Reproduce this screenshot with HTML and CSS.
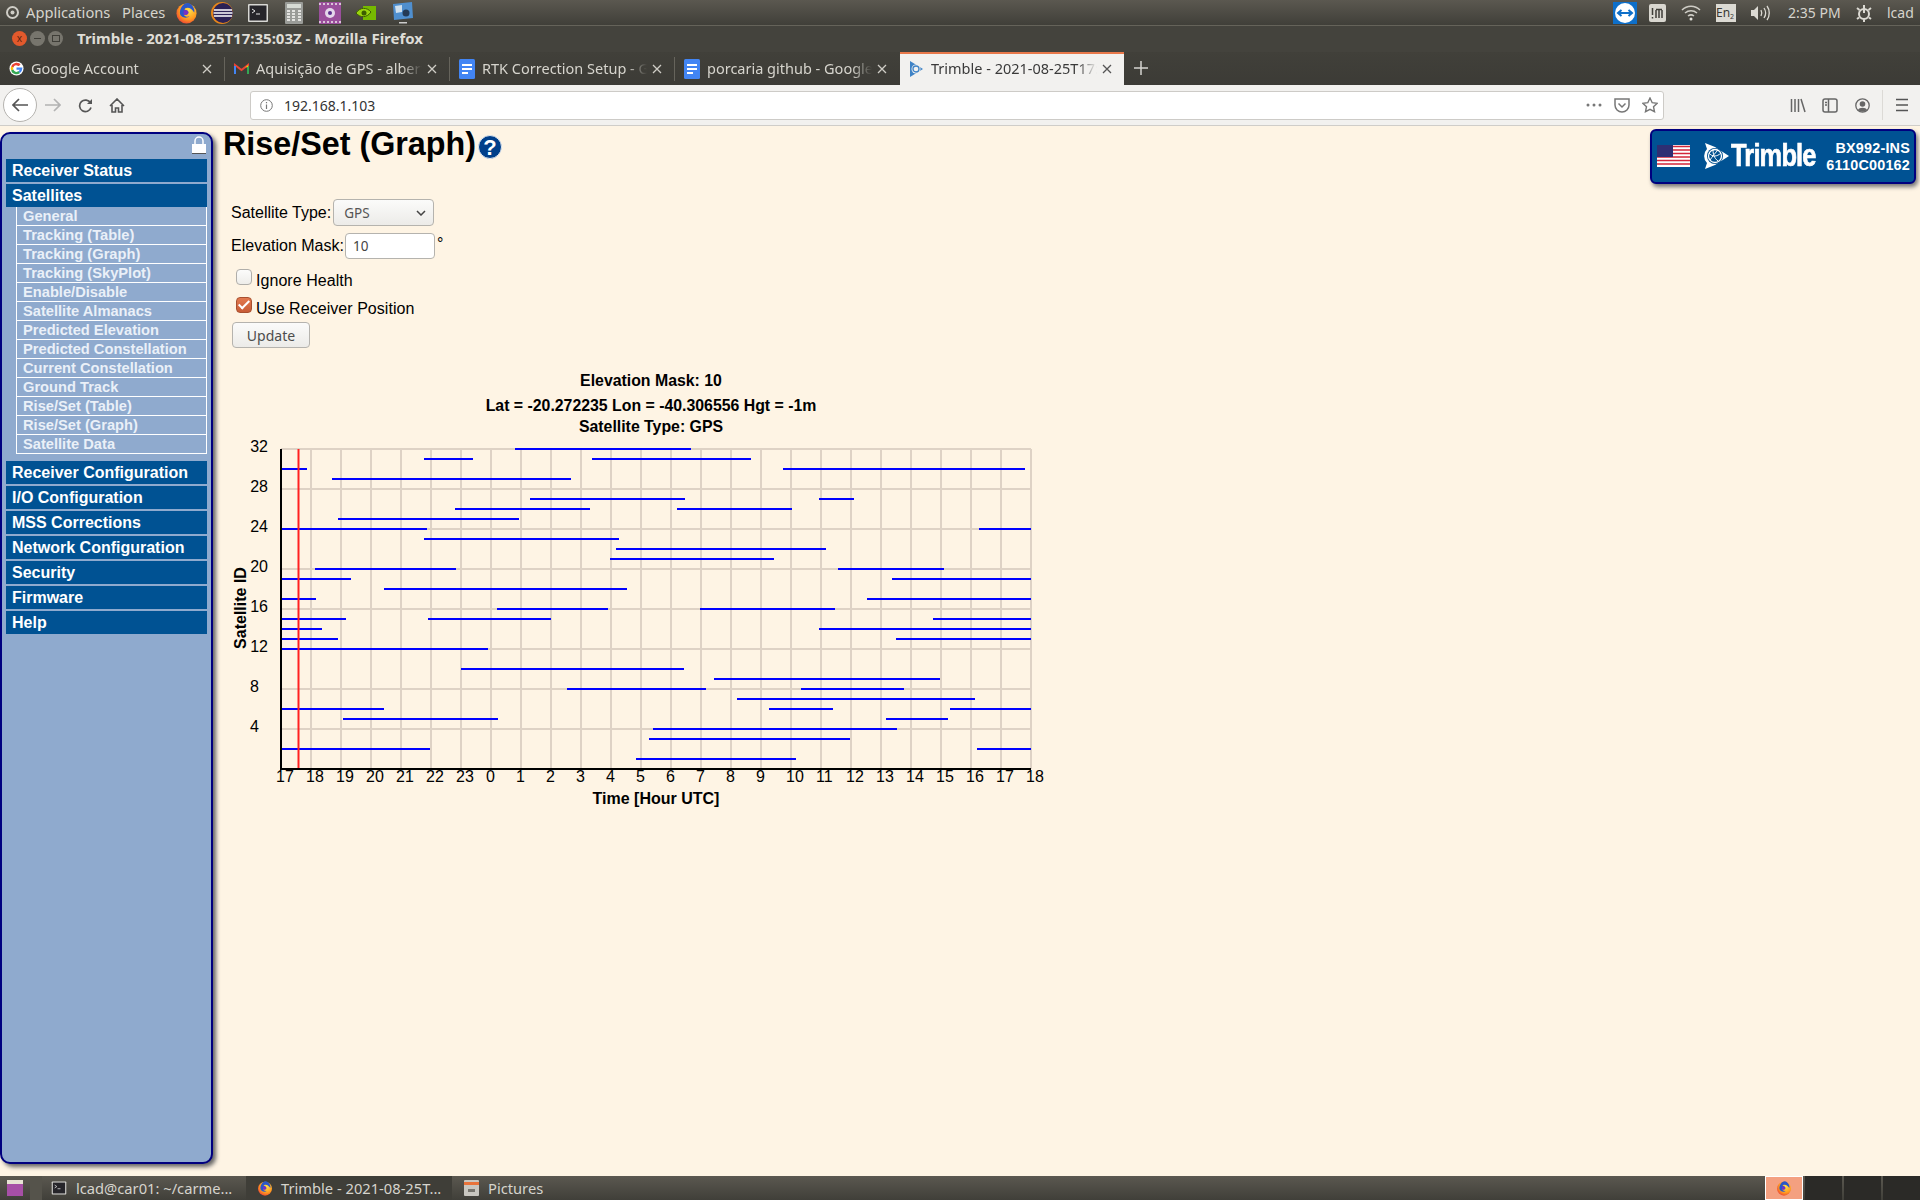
FILE: index.html
```html
<!DOCTYPE html>
<html lang="en">
<head>
    <meta charset="UTF-8">
    <meta name="viewport" content="width=device-width, initial-scale=1.0">
    <title>Trimble - 2021-08-25T17:35:03Z - Mozilla Firefox</title>
    <link rel="stylesheet" href="styles.css">
</head>
<body>
    <!-- shared icons -->
    <svg class="defs" width="0" height="0">
        <defs>
            <radialGradient id="foxfill" cx="0.6" cy="0.35" r="0.8">
                <stop offset="0" stop-color="#ffe14a"/>
                <stop offset="0.55" stop-color="#ff9a1f"/>
                <stop offset="1" stop-color="#e5213f"/>
            </radialGradient>
            <symbol id="i-firefox" viewBox="0 0 24 24">
                <circle cx="12" cy="13" r="10.5" fill="url(#foxfill)"/>
                <path d="M7 6C9 2 14 1 16 3c3 2 5 6 4 9-2-3-4-5-7-5-2 0-3 1-3 2 2 0 4 1 4 3s-3 3-5 2c1 2 4 3 6 2-2 2-6 2-8 0-3-2-2-7 0-10z" fill="#2a57c7"/>
                <path d="M9 10c2-1 5 0 5 2s-3 3-5 2z" fill="#7b2fc2"/>
            </symbol>
            <symbol id="i-term" viewBox="0 0 22 22">
                <rect x="1" y="2" width="20" height="18" rx="1" fill="#d8d8d4"/>
                <rect x="2.500" y="3.500" width="17" height="15" fill="#26252a"/>
                <path d="M5 7l3 2-3 2M9 12h4" fill="none" stroke="#e8e8e8" stroke-width="1"/>
            </symbol>
            <symbol id="i-doc" viewBox="0 0 16 20">
                <rect width="16" height="20" rx="1.500" fill="#4285f4"/>
                <path d="M3 6h10M3 10h10M3 14h6" stroke="#fff" stroke-width="1.800"/>
            </symbol>
            <symbol id="i-x" viewBox="0 0 10 10">
                <path d="M1 1l8 8M9 1l-8 8" fill="none" stroke="currentColor" stroke-width="1.300"/>
            </symbol>
        </defs>
    </svg>

    <!-- desktop panel -->
    <div class="panel-top">
        <div class="panel-left">
            <svg class="ubuntu" width="13" height="13" viewBox="0 0 13 13"><circle cx="6.500" cy="6.500" r="5.500" fill="none" stroke="#cfcdc6" stroke-width="2"/><circle cx="6.500" cy="6.500" r="2" fill="#cfcdc6"/></svg>
            <span class="menu-apps">Applications</span>
            <span class="menu-places">Places</span>
            <svg class="launch l-fox" width="23" height="23"><use href="#i-firefox"/></svg>
            <svg class="launch l-ecl" width="24" height="24" viewBox="0 0 24 24"><circle cx="12" cy="12" r="11" fill="#e8861a"/><circle cx="13" cy="12" r="10" fill="#2c2255"/><path d="M4 9h18M3.500 12h19M4 15h18" stroke="#fff" stroke-width="1.600"/></svg>
            <svg class="launch l-term" width="22" height="22"><use href="#i-term"/></svg>
            <svg class="launch l-calc" width="18" height="22" viewBox="0 0 18 22"><rect width="18" height="22" rx="1" fill="#9a9c98"/><rect x="2" y="2" width="14" height="4" fill="#d7dbd5"/><path d="M2 9h3M7 9h3M13 9h3M2 12h3M7 12h3M13 12h3M2 15h3M7 15h3M13 15h3M2 18h3M7 18h3M13 18h3" stroke="#e3e3e0" stroke-width="2"/></svg>
            <svg class="launch l-vid" width="22" height="22" viewBox="0 0 22 22"><rect width="22" height="22" fill="#9a4f9c"/><path d="M0 2h22M0 20h22" stroke="#d9c4d8" stroke-width="2" stroke-dasharray="2 2"/><circle cx="11" cy="11" r="5" fill="#e4d7ea"/><circle cx="11" cy="11" r="2" fill="#5b2d8e"/></svg>
            <svg class="launch l-nv" width="21" height="18" viewBox="0 0 21 18"><rect x="8" y="2" width="13" height="14" fill="#76b900"/><path d="M1 9c4-6 11-6 15-1-4 6-11 6-15 1z" fill="#9bd40f" stroke="#3c5e00"/><circle cx="9" cy="9" r="2.500" fill="#3c5e00"/></svg>
            <svg class="launch l-box" width="22" height="24" viewBox="0 0 22 24"><path d="M1 3l19-2 1 16-19 2z" fill="#4f8fcf"/><path d="M3 5l7-1v7l-6 1z" fill="#cfe0ee"/><circle cx="14" cy="12" r="3.500" fill="#243a55"/><path d="M7 21h8v1.500H7z" fill="#ccc"/></svg>
        </div>
        <div class="panel-right">
            <svg class="tray t-tv" width="24" height="22" viewBox="0 0 24 22"><rect width="24" height="22" fill="#0e6fc9"/><circle cx="12" cy="11" r="10" fill="#fff"/><path d="M5 11h14M8.500 8L5 11l3.500 3M15.500 8L19 11l-3.500 3" fill="none" stroke="#0e6fc9" stroke-width="2"/></svg>
            <svg class="tray t-nm" width="17" height="18" viewBox="0 0 17 18"><rect width="17" height="18" rx="2" fill="#d9d7d0"/><path d="M3.500 4v7M3.500 13v1.500M7 6v8M10 6v8M13 6v8M7 5.500h6" stroke="#3f3e38" stroke-width="1.500" fill="none"/></svg>
            <svg class="tray t-wifi" width="20" height="16" viewBox="0 0 20 16"><path d="M1 5c5-5 13-5 18 0M4 8c3.500-3 8.500-3 12 0M7 11c2-1.500 4-1.500 6 0" fill="none" stroke="#cfcdc6" stroke-width="1.500"/><circle cx="10" cy="14" r="1.500" fill="#e4e2dc"/></svg>
            <span class="t-en">En<small>2</small></span>
            <svg class="tray t-vol" width="21" height="18" viewBox="0 0 21 18"><path d="M1 6h3l4-4v14l-4-4H1z" fill="#dcdad3"/><path d="M11 6c1 2 1 4 0 6M14 4c2 3 2 7 0 10M17 2c3 4 3 10 0 14" fill="none" stroke="#dcdad3" stroke-width="1.300"/></svg>
            <span class="t-time">2:35 PM</span>
            <svg class="tray t-gear" width="16" height="18" viewBox="0 0 16 18"><circle cx="8" cy="10" r="5" fill="none" stroke="#dcdad3" stroke-width="2"/><path d="M8 1v8M1 4l2.500 2M15 4l-2.500 2M1 15l2-1.500M15 15l-2-1.500M8 15.500V18" stroke="#dcdad3" stroke-width="2"/></svg>
            <span class="t-user">lcad</span>
        </div>
    </div>

    <!-- firefox window -->
    <div class="titlebar">
        <span class="wbtn wbtn-close">x</span>
        <span class="wbtn wbtn-min"><i class="bar"></i></span>
        <span class="wbtn wbtn-max"><i class="box"></i></span>
        <span class="wintitle">Trimble - 2021-08-25T17:35:03Z - Mozilla Firefox</span>
    </div>

    <div class="tabs">
        <div class="tab">
            <svg class="favicon" width="15" height="15" viewBox="0 0 16 16"><circle cx="8" cy="8" r="7.500" fill="#fff"/><path d="M8 3.200a4.800 4.800 0 0 1 3.300 1.300" fill="none" stroke="#ea4335" stroke-width="2.600"/><path d="M3.400 6.400a4.800 4.800 0 0 1 7.900-1.900" fill="none" stroke="#ea4335" stroke-width="2.600"/><path d="M3.400 9.600a4.800 4.800 0 0 1 0-3.200" fill="none" stroke="#fbbc05" stroke-width="2.600"/><path d="M11 11.800a4.800 4.800 0 0 1-7.600-2.200" fill="none" stroke="#34a853" stroke-width="2.600"/><path d="M8 8h5a5 5 0 0 1-2 3.800" fill="none" stroke="#4285f4" stroke-width="2.400"/></svg>
            <span class="tab-text">Google Account</span>
            <svg class="tab-x" width="10" height="10"><use href="#i-x"/></svg>
        </div>
        <div class="tab-sep"></div>
        <div class="tab">
            <svg class="favicon" width="15" height="12" viewBox="0 0 15 12"><path d="M1 11V2l6.500 5L14 2v9" fill="none" stroke="#ea4335" stroke-width="2"/><path d="M1 11V3" stroke="#4285f4" stroke-width="2"/><path d="M14 11V3" stroke="#34a853" stroke-width="2"/><path d="M11 4.500L14 2v2" fill="#fbbc05"/></svg>
            <span class="tab-text">Aquisição de GPS - alberto.ufes</span>
            <svg class="tab-x" width="10" height="10"><use href="#i-x"/></svg>
        </div>
        <div class="tab-sep"></div>
        <div class="tab">
            <svg class="favicon" width="16" height="20"><use href="#i-doc"/></svg>
            <span class="tab-text">RTK Correction Setup - Google Docs</span>
            <svg class="tab-x" width="10" height="10"><use href="#i-x"/></svg>
        </div>
        <div class="tab-sep"></div>
        <div class="tab">
            <svg class="favicon" width="16" height="20"><use href="#i-doc"/></svg>
            <span class="tab-text">porcaria github - Google Docs</span>
            <svg class="tab-x" width="10" height="10"><use href="#i-x"/></svg>
        </div>
        <div class="tab tab-active">
            <svg class="favicon" width="15" height="18" viewBox="0 0 15 18"><path d="M1 1l13 8-13 8z" fill="#3f83c6"/><circle cx="7" cy="9" r="4.500" fill="#f2f1ef"/><circle cx="7" cy="9" r="3" fill="none" stroke="#3f83c6" stroke-width="1.300"/></svg>
            <span class="tab-text">Trimble - 2021-08-25T17:35:03Z</span>
            <svg class="tab-x" width="10" height="10"><use href="#i-x"/></svg>
        </div>
        <svg class="tab-new" width="14" height="14" viewBox="0 0 14 14"><path d="M7 0v14M0 7h14" stroke="#d5d4cf" stroke-width="1.500"/></svg>
    </div>

    <div class="navbar">
        <span class="nav-back"><svg width="16" height="14" viewBox="0 0 16 14"><path d="M7 1L1 7l6 6M1 7h15" fill="none" stroke="#555" stroke-width="1.700"/></svg></span>
        <svg class="nav-fwd" width="16" height="14" viewBox="0 0 16 14"><path d="M9 1l6 6-6 6M15 7H0" fill="none" stroke="#b3b3b3" stroke-width="1.700"/></svg>
        <svg class="nav-reload" width="15" height="15" viewBox="0 0 15 15"><path d="M12.500 5A5.800 5.800 0 1 0 13 9.500" fill="none" stroke="#555" stroke-width="1.700"/><path d="M14 1v5H9z" fill="#555"/></svg>
        <svg class="nav-home" width="16" height="15" viewBox="0 0 16 15"><path d="M1 8l7-7 7 7M3 7v7h3.500v-4h3v4H13V7" fill="none" stroke="#555" stroke-width="1.600"/></svg>
        <div class="urlbar">
            <svg class="url-info" width="13" height="13" viewBox="0 0 13 13"><circle cx="6.500" cy="6.500" r="5.800" fill="none" stroke="#777"/><path d="M6.500 5.500v4.500M6.500 3v1.300" stroke="#777" stroke-width="1.200"/></svg>
            <span class="url-text">192.168.1.103</span>
            <svg class="url-dots" width="16" height="4" viewBox="0 0 16 4"><circle cx="2" cy="2" r="1.500" fill="#777"/><circle cx="8" cy="2" r="1.500" fill="#777"/><circle cx="14" cy="2" r="1.500" fill="#777"/></svg>
            <svg class="url-pocket" width="16" height="15" viewBox="0 0 16 15"><path d="M1 1h14v6a7 7 0 0 1-14 0z" fill="none" stroke="#777" stroke-width="1.500"/><path d="M4.500 5.500L8 9l3.500-3.500" fill="none" stroke="#777" stroke-width="1.500"/></svg>
            <svg class="url-star" width="16" height="16" viewBox="0 0 16 16"><path d="M8 1l2.200 4.700 5 .6-3.700 3.400 1 5L8 12.300l-4.500 2.400 1-5L.8 6.300l5-.6z" fill="none" stroke="#777" stroke-width="1.400"/></svg>
        </div>
        <svg class="nav-lib" width="16" height="15" viewBox="0 0 16 15"><path d="M1.500 1v13M5 1v13M8.500 1v13M11 1l4 13" fill="none" stroke="#666" stroke-width="1.500"/></svg>
        <svg class="nav-side" width="16" height="15" viewBox="0 0 16 15"><rect x="1" y="1" width="14" height="13" rx="2" fill="none" stroke="#666" stroke-width="1.500"/><path d="M6.500 1v13M3 4.500h2M3 7h2" stroke="#666" stroke-width="1.500"/></svg>
        <svg class="nav-acct" width="15" height="15" viewBox="0 0 15 15"><circle cx="7.500" cy="7.500" r="6.700" fill="none" stroke="#666" stroke-width="1.300"/><circle cx="7.500" cy="6" r="2.800" fill="#666"/><path d="M3 12c1-3 8-3 9 0a6.500 6.500 0 0 1-9 0z" fill="#666"/></svg>
        <div class="nav-sep"></div>
        <svg class="nav-menu" width="12" height="14" viewBox="0 0 12 14"><path d="M0 1.500h12M0 7h12M0 12.500h12" stroke="#555" stroke-width="1.700"/></svg>
    </div>

    <!-- receiver page -->
    <div class="page">
        <aside class="sidebar">
            <div class="lock-row">
                <svg width="14" height="18" viewBox="0 0 14 18"><path d="M3 8V5a4 4 0 0 1 8 0v3" fill="none" stroke="#fff" stroke-width="1.500"/><rect x="0" y="8" width="14" height="10" fill="#fff"/><path d="M0 17.500h14" stroke="#555"/></svg>
            </div>
            <a class="nav-item">Receiver Status</a>
            <a class="nav-item nav-open">Satellites</a>
            <ul class="subnav">
                <li>General</li>
                <li>Tracking (Table)</li>
                <li>Tracking (Graph)</li>
                <li>Tracking (SkyPlot)</li>
                <li>Enable/Disable</li>
                <li>Satellite Almanacs</li>
                <li>Predicted Elevation</li>
                <li>Predicted Constellation</li>
                <li>Current Constellation</li>
                <li>Ground Track</li>
                <li>Rise/Set (Table)</li>
                <li>Rise/Set (Graph)</li>
                <li>Satellite Data</li>
            </ul>
            <a class="nav-item">Receiver Configuration</a>
            <a class="nav-item">I/O Configuration</a>
            <a class="nav-item">MSS Corrections</a>
            <a class="nav-item">Network Configuration</a>
            <a class="nav-item">Security</a>
            <a class="nav-item">Firmware</a>
            <a class="nav-item">Help</a>
        </aside>

        <main class="content">
            <div class="head">
                <h1>Rise/Set (Graph)</h1>
                <svg class="help" width="24" height="24" viewBox="0 0 24 24"><circle cx="12" cy="12" r="11.500" fill="#003f8a" stroke="#dfe6ef"/><text class="help-mark" x="12" y="20">?</text></svg>
                <div class="brand">
                    <svg class="flag" width="33" height="22" viewBox="0 0 33 22">
                        <rect width="33" height="22" fill="#fff"/>
                        <path d="M0 1.500h33M0 5h33M0 8.500h33M0 12h33M0 15.500h33M0 19h33" stroke="#d3263a" stroke-width="1.700"/>
                        <rect width="16" height="12" fill="#2e2f73"/>
                    </svg>
                    <svg class="globe" width="28" height="28" viewBox="0 0 28 28"><path d="M3 1l10 4 14 9-14 9-10 4 2-6a10 10 0 0 1 0-14z" fill="#fff"/><circle cx="13" cy="14" r="8" fill="#00508f"/><circle cx="13" cy="14" r="6.500" fill="none" stroke="#fff" stroke-width="1.300"/><path d="M7 11c3 4 8 4 12 0M11 8c0 4 1 8 5 11M8 18c2-3 6-8 8-10" fill="none" stroke="#fff"/></svg>
                    <span class="brand-name">Trimble</span>
                    <div class="brand-model">
                        <span>BX992-INS</span>
                        <span>6110C00162</span>
                    </div>
                </div>
            </div>

            <form class="opts">
                <div class="row row-sat">
                    <label>Satellite Type:</label>
                    <div class="sel-wrap">
                        <select class="sel"><option>GPS</option></select>
                        <svg class="sel-arrow" width="10" height="6" viewBox="0 0 10 6"><path d="M1 1l4 4 4-4" fill="none" stroke="#444" stroke-width="1.500"/></svg>
                    </div>
                </div>
                <div class="row row-mask">
                    <label>Elevation Mask:</label>
                    <input class="txt" type="text" value="10">
                    <span class="deg">°</span>
                </div>
                <div class="row row-chk">
                    <input class="chk" type="checkbox">
                    <label>Ignore Health</label>
                </div>
                <div class="row row-chk2">
                    <input class="chk" type="checkbox" checked>
                    <label>Use Receiver Position</label>
                </div>
                <button class="btn" type="button">Update</button>
            </form>

            <!-- viewBox uses page coordinates -->
            <svg class="chart" width="860" height="460" viewBox="220 360 860 460">
                <path class="grid" d="M311 449V769M341 449V769M371 449V769M401 449V769M431 449V769M461 449V769M491 449V769M521 449V769M551 449V769M581 449V769M611 449V769M641 449V769M671 449V769M701 449V769M731 449V769M761 449V769M791 449V769M821 449V769M851 449V769M881 449V769M911 449V769M941 449V769M971 449V769M1001 449V769M1031 449V769
                    M281 449H1031M281 489H1031M281 529H1031M281 569H1031M281 609H1031M281 649H1031M281 689H1031M281 729H1031"/>
                <path class="sats" d="M515 449H691
                    M424 459H473M592 459H751
                    M281 469H307M783 469H1025
                    M332 479H571
                    M530 499H685M819 499H854
                    M455 509H590M677 509H792
                    M338 519H519
                    M281 529H427M979 529H1031
                    M424 539H619
                    M616 549H826
                    M610 559H774
                    M315 569H456M838 569H944
                    M281 579H351M892 579H1031
                    M384 589H627
                    M281 599H316M867 599H1031
                    M497 609H608M700 609H835
                    M281 619H346M428 619H551M933 619H1031
                    M281 629H322M819 629H1031
                    M281 639H338M896 639H1031
                    M281 649H488
                    M461 669H684
                    M714 679H940
                    M567 689H706M801 689H904
                    M737 699H975
                    M281 709H384M769 709H833M950 709H1031
                    M343 719H498M886 719H948
                    M653 729H897
                    M649 739H850
                    M281 749H430M977 749H1031
                    M636 759H796"/>
                <path class="now" d="M298.500 449V769"/>
                <path class="axis" d="M281 449V769H1031"/>

                <text class="t-title" x="651" y="386">Elevation Mask: 10</text>
                <text class="t-title" x="651" y="411">Lat = -20.272235 Lon = -40.306556 Hgt = -1m</text>
                <text class="t-title" x="651" y="432">Satellite Type: GPS</text>

                <g class="ylab">
                    <text x="268" y="452">32</text>
                    <text x="268" y="492">28</text>
                    <text x="268" y="532">24</text>
                    <text x="268" y="572">20</text>
                    <text x="268" y="612">16</text>
                    <text x="268" y="652">12</text>
                    <text x="259" y="692">8</text>
                    <text x="259" y="732">4</text>
                </g>
                <g class="xlab">
                    <text x="276" y="782">17</text>
                    <text x="306" y="782">18</text>
                    <text x="336" y="782">19</text>
                    <text x="366" y="782">20</text>
                    <text x="396" y="782">21</text>
                    <text x="426" y="782">22</text>
                    <text x="456" y="782">23</text>
                    <text x="486" y="782">0</text>
                    <text x="516" y="782">1</text>
                    <text x="546" y="782">2</text>
                    <text x="576" y="782">3</text>
                    <text x="606" y="782">4</text>
                    <text x="636" y="782">5</text>
                    <text x="666" y="782">6</text>
                    <text x="696" y="782">7</text>
                    <text x="726" y="782">8</text>
                    <text x="756" y="782">9</text>
                    <text x="786" y="782">10</text>
                    <text x="816" y="782">11</text>
                    <text x="846" y="782">12</text>
                    <text x="876" y="782">13</text>
                    <text x="906" y="782">14</text>
                    <text x="936" y="782">15</text>
                    <text x="966" y="782">16</text>
                    <text x="996" y="782">17</text>
                    <text x="1026" y="782">18</text>
                </g>
                <text class="t-axis" x="656" y="804">Time [Hour UTC]</text>
                <text class="t-axis" transform="translate(246 608) rotate(-90)">Satellite ID</text>
            </svg>
        </main>
    </div>

    <!-- window list -->
    <div class="panel-bottom">
        <svg class="show-desk" width="16" height="16" viewBox="0 0 16 16"><rect width="16" height="16" fill="#a64fa6"/><rect width="16" height="4" fill="#e7e3d4"/></svg>
        <div class="grip"></div>
        <div class="task task-term">
            <svg width="16" height="16"><use href="#i-term"/></svg>
            <span>lcad@car01: ~/carme...</span>
        </div>
        <div class="task task-on">
            <svg width="16" height="16"><use href="#i-firefox"/></svg>
            <span>Trimble - 2021-08-25T...</span>
        </div>
        <div class="task task-pics">
            <svg width="15" height="16" viewBox="0 0 15 16"><rect width="15" height="16" rx="1" fill="#c9c7c0"/><rect y="2" width="15" height="3" fill="#e8733a"/><rect x="4" y="9" width="7" height="3" fill="#77756e"/></svg>
            <span>Pictures</span>
        </div>
        <div class="workspaces">
            <div class="ws ws-on"><svg width="16" height="16"><use href="#i-firefox"/></svg></div>
            <div class="ws"></div>
            <div class="ws"></div>
            <div class="ws"></div>
        </div>
    </div>
</body>
</html>
```

FILE: styles.css
```css
html, body {
    margin: 0;
    padding: 0;
    height: 1200px;
    overflow: hidden;
}
body {
    display: flex;
    flex-direction: column;
    font-family: "Liberation Sans", Arial, sans-serif;
    background-color: #fef4e4;
    color: #000;
}
.defs {
    position: absolute;
}

/* ---- desktop panels ---- */
.panel-top {
    flex: none;
    height: 25px;
    border-bottom: 1px solid #65635a;
    background: linear-gradient(#5b5850, #403f39);
    display: flex;
    justify-content: space-between;
    align-items: center;
    font-family: "Noto Sans", sans-serif;
    font-size: 14.7px;
    color: #d6d4cd;
}
.panel-left, .panel-right {
    display: flex;
    align-items: center;
    height: 25px;
}
.ubuntu { margin-left: 6px; }
.menu-apps { margin: -2px 0 0 7px; width: 87px; white-space: nowrap; }
.menu-places { margin: -2px 0 0 9px; width: 43px; }
.l-fox { margin-left: 10px; }
.l-ecl { margin-left: 12px; }
.l-term { margin-left: 13px; }
.l-calc { margin-left: 16px; }
.l-vid { margin-left: 16px; }
.l-nv { margin-left: 14px; }
.l-box { margin-left: 16px; }
.t-tv { margin-right: 12px; }
.t-nm { margin-right: 15px; }
.t-wifi { margin-right: 15px; }
.t-en {
    width: 20px;
    height: 18px;
    overflow: hidden;
    background-color: #dcdad3;
    color: #3a3934;
    font-size: 12px;
    line-height: 18px;
    margin-right: 14px;
    white-space: nowrap;
}
.t-en small { font-size: 7px; vertical-align: -2px; }
.t-vol { margin-right: 17px; }
.t-time { width: 68px; font-size: 14px; white-space: nowrap; }
.t-gear { margin-right: 15px; }
.t-user { width: 33px; font-size: 14px; white-space: nowrap; }

.panel-bottom {
    flex: none;
    height: 24px;
    background: linear-gradient(#5b5850, #403f39);
    display: flex;
    align-items: center;
    font-family: "Noto Sans", sans-serif;
    font-size: 14.7px;
    color: #d6d4cd;
}
.show-desk { margin-left: 7px; }
.grip {
    width: 12px;
    height: 24px;
    margin-left: 7px;
    background-color: #55534b;
}
.task {
    height: 24px;
    display: flex;
    align-items: center;
    white-space: nowrap;
}
.task span { margin-left: 9px; }
.task-term { margin-left: 9px; width: 195px; }
.task-on {
    width: 206px;
    padding-left: 11px;
    box-sizing: border-box;
    background: #3f3e38;
}
.task-on span { margin-left: 8px; }
.task-pics { margin-left: 12px; }
.workspaces {
    margin-left: auto;
    display: flex;
    height: 24px;
}
.ws {
    width: 37px;
    height: 24px;
    margin-left: 2px;
    background-color: #2b2a27;
    box-sizing: border-box;
}
.ws-on {
    width: 38px;
    border: 1px solid #fff;
    background-color: #f4a080;
    display: flex;
    align-items: center;
    justify-content: center;
}

/* ---- firefox chrome ---- */
.titlebar {
    flex: none;
    height: 26px;
    box-sizing: border-box;
    padding: 0 0 2px 12px;
    background: #44433d;
    display: flex;
    align-items: center;
    font-family: "Noto Sans", sans-serif;
}
.wbtn {
    width: 15px;
    height: 15px;
    border-radius: 50%;
    margin-right: 3px;
    display: flex;
    align-items: center;
    justify-content: center;
    background-color: #77756d;
}
.wbtn-close {
    background-color: #e2592c;
    color: #5a2410;
    font-size: 10px;
    line-height: 15px;
}
.bar {
    width: 7px;
    height: 1px;
    background-color: #3f3e38;
}
.box {
    width: 6px;
    height: 5px;
    border: 1px solid #3f3e38;
}
.wintitle {
    margin-left: 11px;
    font-size: 15px;
    font-weight: 700;
    color: #dfddd6;
    white-space: nowrap;
}

.tabs {
    flex: none;
    height: 33px;
    background: linear-gradient(#41403a, #3c3b36);
    display: flex;
    align-items: flex-end;
    font-family: "Noto Sans", sans-serif;
    font-size: 14.5px;
    color: #d6d4cd;
}
.tab {
    width: 224px;
    height: 33px;
    box-sizing: border-box;
    padding: 0 12px 0 9px;
    display: flex;
    align-items: center;
}
.tab-text {
    flex: 1;
    min-width: 0;
    margin: -2px 5px 0 7px;
    overflow: hidden;
    white-space: nowrap;
    -webkit-mask-image: linear-gradient(to right, #000 88%, transparent);
    mask-image: linear-gradient(to right, #000 88%, transparent);
}
.tab-x {
    flex: none;
    color: #cfcdc6;
}
.tab-sep {
    width: 1px;
    height: 24px;
    margin-bottom: 4px;
    background-color: #66645c;
}
.tab-active {
    border-top: 2px solid #e8784a;
    padding-bottom: 2px;
    background-color: #f2f1ef;
    color: #3a3a3a;
    margin-left: 1px;
}
.tab-active .tab-text { margin-left: 7px; }
.tab-active .tab-x { color: #555; }
.tab-new { margin: 0 0 10px 10px; }

.navbar {
    flex: none;
    height: 40px;
    border-bottom: 1px solid #cfcdc9;
    background-color: #f2f1ef;
    display: flex;
    align-items: center;
}
.nav-back {
    width: 32px;
    height: 32px;
    margin-left: 3px;
    border: 1px solid #b5b3af;
    border-radius: 50%;
    background-color: #fff;
    display: flex;
    align-items: center;
    justify-content: center;
}
.nav-fwd { margin-left: 8px; }
.nav-reload { margin-left: 17px; }
.nav-home { margin-left: 16px; }
.urlbar {
    width: 1412px;
    height: 27px;
    margin-left: 125px;
    border: 1px solid #cdcbc7;
    border-radius: 3px;
    background-color: #fff;
    display: flex;
    align-items: center;
    font-family: "Noto Sans", sans-serif;
    font-size: 14px;
    color: #333;
}
.url-info { margin-left: 9px; }
.url-text { margin-left: 11px; }
.url-dots { margin-left: auto; }
.url-pocket { margin-left: 12px; }
.url-star { margin-left: 12px; margin-right: 5px; }
.nav-lib { margin-left: 126px; }
.nav-side { margin-left: 16px; }
.nav-acct { margin-left: 17px; }
.nav-sep {
    width: 1px;
    height: 30px;
    margin-left: 12px;
    background-color: #dcdad6;
}
.nav-menu { margin-left: 13px; }

/* ---- receiver page ---- */
.page {
    flex: 1;
    min-height: 0;
    display: flex;
}
.sidebar {
    flex: none;
    width: 201px;
    height: 1028px;
    margin-top: 6px;
    border: 2px solid #00007f;
    border-radius: 10px;
    background-color: #8faace;
    box-shadow: 3px 3px 4px #666;
    padding: 0 4px;
    box-sizing: content-box;
}
.lock-row {
    height: 25px;
    display: flex;
    justify-content: flex-end;
    align-items: flex-start;
    padding: 2px 1px 0 0;
    box-sizing: border-box;
}
.nav-item {
    display: block;
    height: 23px;
    margin-bottom: 2px;
    padding-left: 6px;
    background-color: #005293;
    color: #fff;
    font-size: 16px;
    font-weight: 700;
    line-height: 23px;
}
.nav-open { margin-bottom: 0; }
.subnav {
    list-style: none;
    margin: 0 0 7px 10px;
    padding: 0;
    border-left: 1px solid #fff;
    border-right: 1px solid #fff;
    color: #eaf0f8;
    font-size: 14.67px;
    font-weight: 700;
}
.subnav li {
    height: 18px;
    line-height: 18px;
    border-bottom: 1px solid #fff;
    padding-left: 6px;
    white-space: nowrap;
}
.content {
    flex: 1;
    min-width: 0;
}
.head {
    height: 73px;
    display: flex;
    align-items: flex-start;
    padding-left: 10px;
}
h1 {
    margin: 0;
    font-size: 32.3px;
    line-height: 37px;
    font-weight: 700;
    white-space: nowrap;
}
.help {
    flex: none;
    margin: 9px 0 0 2px;
}
.help-mark {
    fill: #fff;
    font-family: "Liberation Sans", Arial, sans-serif;
    font-size: 22px;
    font-weight: 700;
    text-anchor: middle;
}
.brand {
    width: 266px;
    height: 55px;
    box-sizing: border-box;
    margin: 3px 4px 0 auto;
    border: 2px solid #00007f;
    border-radius: 6px;
    background-color: #005293;
    box-shadow: 2px 3px 4px #777;
    color: #fff;
    display: flex;
    align-items: center;
    white-space: nowrap;
}
.flag { margin: -2px 0 0 5px; }
.globe { margin: -1px 0 0 12px; }
.brand-name {
    flex: none;
    width: 88px;
    margin: -2px 0 0 1px;
    font-size: 31px;
    font-weight: 700;
    letter-spacing: -1px;
    -webkit-text-stroke: 0.7px #fff;
    transform: scaleX(0.82);
    transform-origin: left center;
}
.brand-model {
    display: flex;
    flex-direction: column;
    align-items: flex-end;
    margin-left: auto;
    margin-right: 4px;
    font-size: 14.4px;
    font-weight: 700;
    letter-spacing: 0.2px;
    line-height: 17px;
}
.opts {
    padding-left: 18px;
    font-size: 16px;
}
.row {
    display: flex;
    align-items: center;
    white-space: nowrap;
}
.row-sat { height: 27px; }
.row-mask { height: 26px; margin-top: 7px; }
.row-chk { height: 22px; margin-top: 8px; padding-left: 5px; }
.row-chk2 { height: 22px; margin-top: 6px; padding-left: 5px; }
.row-chk label, .row-chk2 label { margin-top: 6px; letter-spacing: 0.05px; }
.sel-wrap {
    position: relative;
    width: 101px;
    height: 27px;
    margin-left: 2px;
}
.sel {
    width: 101px;
    height: 27px;
    box-sizing: border-box;
    padding-left: 10px;
    appearance: none;
    -webkit-appearance: none;
    border: 1px solid #b5b3ae;
    border-radius: 4px;
    background: linear-gradient(#fbfbfa, #ecebe8);
    font-family: "Noto Sans", sans-serif;
    font-size: 13.5px;
    color: #555;
}
.sel-arrow {
    position: absolute;
    right: 8px;
    top: 11px;
}
.txt {
    width: 90px;
    height: 26px;
    box-sizing: border-box;
    margin-left: 1px;
    padding: 0 7px;
    border: 1px solid #b5b3ae;
    border-radius: 4px;
    background-color: #fff;
    font-family: "Noto Sans", sans-serif;
    font-size: 13.5px;
    color: #444;
}
.deg { margin: -4px 0 0 2px; font-size: 16px; }
.chk {
    appearance: none;
    -webkit-appearance: none;
    width: 16px;
    height: 16px;
    margin: -3px 4px 0 0;
    box-sizing: border-box;
    border: 1px solid #b0aeaa;
    border-radius: 4px;
    background: linear-gradient(#fcfcfb, #eeedea);
    position: relative;
}
.chk:checked {
    border-color: #a8502f;
    background: linear-gradient(#e2794f, #c85c36);
}
.chk:checked::after {
    content: "";
    position: absolute;
    left: 4px;
    top: 0;
    width: 4px;
    height: 9px;
    border: solid #fff;
    border-width: 0 2px 2px 0;
    transform: rotate(45deg);
}
.btn {
    display: block;
    width: 78px;
    height: 26px;
    margin: 5px 0 0 1px;
    padding: 0;
    border: 1px solid #b5b3ae;
    border-radius: 4px;
    background: linear-gradient(#fbfbfa, #ecebe8);
    font-family: "Noto Sans", sans-serif;
    font-size: 14px;
    color: #4d4d4d;
}
.chart {
    display: block;
    margin: 12px 0 0 7px;
    overflow: visible;
}
.grid {
    fill: none;
    stroke: #ded2c5;
    stroke-width: 2;
}
.sats {
    fill: none;
    stroke: #0000ff;
    stroke-width: 2;
}
.now {
    fill: none;
    stroke: #ff2020;
    stroke-width: 2;
}
.axis {
    fill: none;
    stroke: #000;
    stroke-width: 2;
}
.chart text {
    font-family: "Liberation Sans", Arial, sans-serif;
    font-size: 16px;
    fill: #000;
}
.chart .t-title {
    font-size: 15.85px;
    font-weight: 700;
    text-anchor: middle;
}
.chart .t-axis {
    font-weight: 700;
    text-anchor: middle;
}
.ylab text { text-anchor: end; }
```
